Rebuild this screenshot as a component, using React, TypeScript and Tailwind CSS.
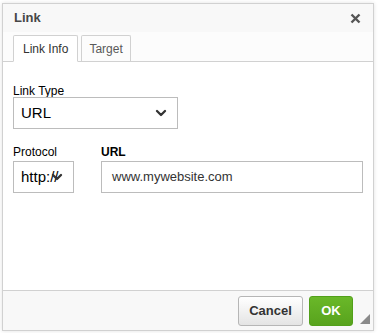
import { ChevronDown } from "lucide-react";

const FONT = "font-['Liberation_Sans',Arial,sans-serif]";

function SelectBox({ value, width }: { value: string; width: string }) {
  return (
    <div
      className={`${width} h-[32px] relative flex items-center border border-[#bcbcbc] bg-white pl-[7px] text-[15px] text-[#000] overflow-hidden`}
    >
      <span className="whitespace-nowrap">{value}</span>
      <ChevronDown
        size={16}
        strokeWidth={3.5}
        className="absolute right-[8px] top-[7px] text-[#333]"
      />
    </div>
  );
}

export default function App() {
  return (
    <div className={`w-[378px] h-[333px] bg-white ${FONT} pt-[3px] pl-[2px]`}>
      <div className="w-[372px] h-[328px] flex flex-col border border-[#d1d1d1] bg-white shadow-[0_0_4px_rgba(0,0,0,0.12)]">
        {/* title */}
        <div className="h-[28px] flex items-center justify-between bg-[#f8f8f8] pl-[11px] pr-[12px]">
          <span className="text-[13px] font-bold text-[#474747]">Link</span>
          <svg width="11" height="11" viewBox="0 0 11 11" className="text-[#555]">
            <path d="M1.5 1.5 L9.5 9.5 M9.5 1.5 L1.5 9.5" stroke="currentColor" strokeWidth="2.4" />
          </svg>
        </div>

        {/* tabs */}
        <div className="h-[30px] flex items-end gap-[3px] bg-[#fcfcfc] border-b border-[#d1d1d1] pl-[10px]">
          <div className="h-[27px] -mb-px px-[9px] flex items-center border border-[#d1d1d1] border-b-white bg-white text-[12px] text-[#333] rounded-t-[2px]">
            Link Info
          </div>
          <div className="h-[26px] px-[7px] flex items-center border border-b-0 border-[#d1d1d1] bg-[#fcfcfc] text-[12px] text-[#595959] rounded-t-[2px]">
            Target
          </div>
        </div>

        {/* body */}
        <div className="flex-1 bg-white px-[10px] pt-[23px]">
          <div className="text-[12px] text-[#000] leading-[12px]">Link Type</div>
          <SelectBox value="URL" width="w-[165px]" />

          <div className="flex gap-[27px] mt-[17px]">
            <div className="flex flex-col">
              <div className="text-[12px] text-[#000] leading-[12px] mb-[3px]">Protocol</div>
              <SelectBox value="http://" width="w-[61px]" />
            </div>
            <div className="flex flex-col">
              <div className="text-[12px] font-bold text-[#000] leading-[12px] mb-[3px]">URL</div>
              <div className="w-[262px] h-[32px] flex items-center border border-[#bcbcbc] bg-white pl-[10px] text-[13px] text-[#333]">
                www.mywebsite.com
              </div>
            </div>
          </div>
        </div>

        {/* footer */}
        <div className="h-[40px] flex items-center justify-end gap-[6px] bg-[#f8f8f8] border-t border-[#d1d1d1] pr-[20px] relative">
          <button className="h-[30px] w-[65px] rounded-[3px] border border-[#b6b6b6] bg-gradient-to-b from-white to-[#e4e4e4] text-[13px] font-bold text-[#333]">
            Cancel
          </button>
          <button className="h-[30px] w-[44px] rounded-[3px] border border-[#52a01a] bg-gradient-to-b from-[#6ab829] to-[#58a31d] text-[13px] font-bold text-white">
            OK
          </button>
          <svg width="10" height="10" viewBox="0 0 10 10" className="absolute right-[3px] bottom-[6px]">
            <path d="M10 0 L10 10 L0 10 Z" fill="#8a8a8a" />
          </svg>
        </div>
      </div>
    </div>
  );
}
